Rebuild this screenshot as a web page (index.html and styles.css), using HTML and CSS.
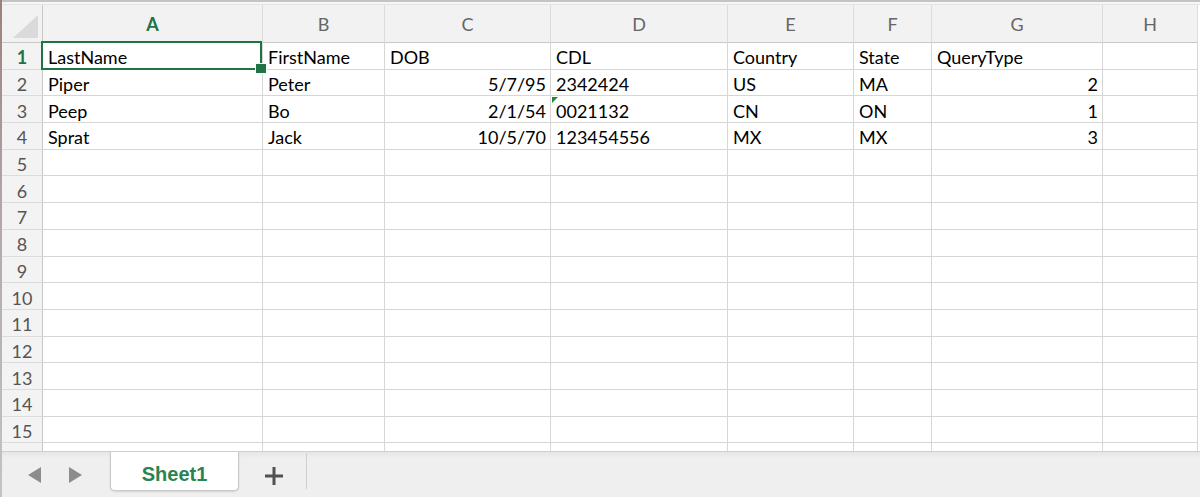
FILE: index.html
```html
<!DOCTYPE html>
<html lang="en">

<head>
    <meta charset="UTF-8">
    <meta name="viewport" content="width=device-width, initial-scale=1.0">
    <title>Book1</title>
    <link rel="stylesheet" href="styles.css">
</head>

<body>
    <div class="window">
        <div class="toolbar-edge"></div>

        <div class="sheet-view">
            <table class="grid">
                <colgroup>
                    <col class="w-rownum">
                    <col class="w-a">
                    <col class="w-b">
                    <col class="w-c">
                    <col class="w-d">
                    <col class="w-e">
                    <col class="w-f">
                    <col class="w-g">
                    <col class="w-h">
                </colgroup>
                <thead>
                    <tr>
                        <th class="corner"><span class="select-all"></span></th>
                        <th class="active">A</th>
                        <th>B</th>
                        <th>C</th>
                        <th>D</th>
                        <th>E</th>
                        <th>F</th>
                        <th>G</th>
                        <th>H</th>
                    </tr>
                </thead>
                <tbody>
                    <tr>
                        <th class="active">1</th>
                        <td class="selected">LastName</td>
                        <td>FirstName</td>
                        <td>DOB</td>
                        <td>CDL</td>
                        <td>Country</td>
                        <td>State</td>
                        <td>QueryType</td>
                        <td></td>
                    </tr>
                    <tr>
                        <th>2</th>
                        <td>Piper</td>
                        <td>Peter</td>
                        <td class="num">5/7/95</td>
                        <td>2342424</td>
                        <td>US</td>
                        <td>MA</td>
                        <td class="num">2</td>
                        <td></td>
                    </tr>
                    <tr>
                        <th>3</th>
                        <td>Peep</td>
                        <td>Bo</td>
                        <td class="num">2/1/54</td>
                        <td class="flagged">0021132</td>
                        <td>CN</td>
                        <td>ON</td>
                        <td class="num">1</td>
                        <td></td>
                    </tr>
                    <tr>
                        <th>4</th>
                        <td>Sprat</td>
                        <td>Jack</td>
                        <td class="num">10/5/70</td>
                        <td>123454556</td>
                        <td>MX</td>
                        <td>MX</td>
                        <td class="num">3</td>
                        <td></td>
                    </tr>
                    <tr><th>5</th><td></td><td></td><td></td><td></td><td></td><td></td><td></td><td></td></tr>
                    <tr><th>6</th><td></td><td></td><td></td><td></td><td></td><td></td><td></td><td></td></tr>
                    <tr><th>7</th><td></td><td></td><td></td><td></td><td></td><td></td><td></td><td></td></tr>
                    <tr><th>8</th><td></td><td></td><td></td><td></td><td></td><td></td><td></td><td></td></tr>
                    <tr><th>9</th><td></td><td></td><td></td><td></td><td></td><td></td><td></td><td></td></tr>
                    <tr><th>10</th><td></td><td></td><td></td><td></td><td></td><td></td><td></td><td></td></tr>
                    <tr><th>11</th><td></td><td></td><td></td><td></td><td></td><td></td><td></td><td></td></tr>
                    <tr><th>12</th><td></td><td></td><td></td><td></td><td></td><td></td><td></td><td></td></tr>
                    <tr><th>13</th><td></td><td></td><td></td><td></td><td></td><td></td><td></td><td></td></tr>
                    <tr><th>14</th><td></td><td></td><td></td><td></td><td></td><td></td><td></td><td></td></tr>
                    <tr><th>15</th><td></td><td></td><td></td><td></td><td></td><td></td><td></td><td></td></tr>
                    <!-- row 16 only peeks above the tab bar -->
                    <tr><th></th><td></td><td></td><td></td><td></td><td></td><td></td><td></td><td></td></tr>
                </tbody>
            </table>
        </div>

        <div class="sheet-tabs">
            <span class="nav-arrow prev"></span>
            <span class="nav-arrow next"></span>
            <div class="tab">Sheet1</div>
            <span class="add-sheet">
                <svg width="18" height="18" viewBox="0 0 18 18">
                    <rect x="7.5" y="0" width="3" height="18" fill="#505050" />
                    <rect x="0" y="7.5" width="18" height="3" fill="#505050" />
                </svg>
            </span>
            <span class="tab-divider"></span>
        </div>
    </div>
</body>

</html>
```

FILE: styles.css
```css
* {
    box-sizing: border-box;
}

html,
body {
    margin: 0;
    padding: 0;
}

body {
    font-family: Lato, "Open Sans", sans-serif;
    background-color: #efefef;
    color: #000;
    overflow: hidden;
}

.window {
    height: 497px;
    display: flex;
    flex-direction: column;
    border-left: 2px solid;
    border-image: linear-gradient(#9a807e, #b0a6a5 40%, #c4c4c4) 1;
}

.toolbar-edge {
    height: 5px;
    background: #f6f6f6;
    border-top: 2px solid #c4c4c4;
    border-bottom: 1px solid #e4e4e4;
}

/* grid */

.sheet-view {
    height: 446px;
    overflow: hidden;
    background: #fff;
}

.grid {
    table-layout: fixed;
    border-collapse: separate;
    border-spacing: 0;
    width: 1196px;
}

.w-rownum { width: 41px; }
.w-a { width: 220px; }
.w-b { width: 122px; }
.w-c { width: 166px; }
.w-d { width: 177px; }
.w-e { width: 126px; }
.w-f { width: 78px; }
.w-g { width: 171px; }
.w-h { width: 95px; }

.grid thead th {
    height: 38px;
    background: #f2f2f2;
    border-right: 1px solid #dcdcdc;
    border-bottom: 1px solid #c8c8c8;
    font-weight: normal;
    font-size: 18px;
    color: #666;
    text-align: center;
    vertical-align: middle;
    padding: 1px 0 0;
}

.grid thead th.corner {
    border-right-color: #c8c8c8;
    text-align: right;
    vertical-align: bottom;
    padding: 0 4px 4px 0;
    line-height: 0;
}

.select-all {
    display: inline-block;
    width: 0;
    height: 0;
    border-left: 25px solid transparent;
    border-bottom: 23px solid #dadada;
}

.grid tbody th {
    height: 26.7px;
    background: #f3f3f3;
    border-right: 1px solid #c8c8c8;
    border-bottom: 1px solid #dcdcdc;
    font-weight: normal;
    font-size: 18px;
    color: #555;
    text-align: center;
    vertical-align: middle;
    padding: 3px 0 0;
    line-height: 1;
}

.grid th.active {
    color: #217346;
    font-weight: bold;
}

.grid td {
    height: 26.7px;
    border-right: 1px solid #d6d6d6;
    border-bottom: 1px solid #d6d6d6;
    padding: 3px 5px 0;
    font-size: 18px;
    line-height: 1;
    white-space: nowrap;
    overflow: hidden;
    vertical-align: middle;
}

.grid td.num {
    text-align: right;
    padding-right: 4px;
}

/* active cell with fill handle */
.grid td.selected {
    position: relative;
    overflow: visible;
}

.grid td.selected::after {
    content: "";
    position: absolute;
    left: -2px;
    top: -2px;
    right: 0;
    bottom: -1px;
    border: 2px solid #217346;
}

.grid td.selected::before {
    content: "";
    position: absolute;
    right: -5px;
    bottom: -5px;
    width: 10px;
    height: 9px;
    background: #217346;
    border: 1px solid #fff;
    z-index: 1;
}

/* "number stored as text" marker */
.grid td.flagged {
    position: relative;
}

.grid td.flagged::before {
    content: "";
    position: absolute;
    left: 1px;
    top: 1px;
    width: 0;
    height: 0;
    border-top: 6px solid #1f8a3c;
    border-right: 6px solid transparent;
}

/* sheet tabs */

.sheet-tabs {
    flex: 1;
    display: flex;
    align-items: flex-start;
    border-top: 1px solid #cfcfcf;
    background: linear-gradient(#e6e6e6, #efefef 6px);
    padding-left: 26px;
}

.nav-arrow {
    width: 0;
    height: 0;
    margin-top: 15px;
    border-top: 8px solid transparent;
    border-bottom: 8px solid transparent;
}

.nav-arrow.prev {
    border-right: 13px solid #8c8c8c;
}

.nav-arrow.next {
    margin-left: 28px;
    border-left: 13px solid #8c8c8c;
}

.tab {
    margin-left: 28px;
    width: 129px;
    height: 39px;
    background: #fff;
    border: 1px solid #c9c9c9;
    border-top: none;
    border-radius: 0 0 5px 5px;
    box-shadow: 0 1px 2px rgba(0, 0, 0, 0.12);
    font-family: "Liberation Sans", Arial, sans-serif;
    font-weight: bold;
    font-size: 20px;
    color: #2a8450;
    text-align: center;
    padding-top: 11px;
}

.add-sheet {
    margin: 15px 0 0 26px;
    line-height: 0;
}

.tab-divider {
    margin: 1px 0 0 23px;
    width: 1px;
    height: 36px;
    background: #cfcfcf;
}
```
